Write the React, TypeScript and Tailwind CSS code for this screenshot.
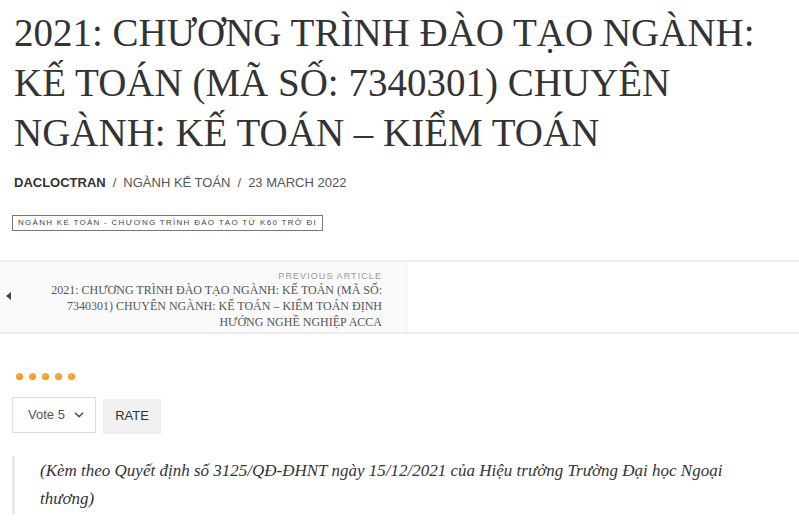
import { ChevronDown } from 'lucide-react';

const serif = "font-['Liberation_Serif',serif]";
const sans = "font-['Liberation_Sans',Arial,sans-serif]";

const App = () => {
  return (
    <div className="w-[799px] min-h-[530px] bg-white overflow-hidden">
      <div className="px-[14px] pt-[8px]">
        <h1 className={`${serif} text-[39px] leading-[50px] text-[#333] font-normal`}>
          2021: CHƯƠNG TRÌNH ĐÀO TẠO NGÀNH: KẾ TOÁN (MÃ SỐ: 7340301) CHUYÊN NGÀNH: KẾ TOÁN – KIỂM TOÁN
        </h1>

        <div className={`${sans} mt-[15px] text-[13px] uppercase text-[#555] flex gap-[7px]`}>
          <span className="font-bold text-[#333]">Dacloctran</span>
          <span>/</span>
          <span>Ngành Kế toán</span>
          <span>/</span>
          <span>23 March 2022</span>
        </div>

        <div className="mt-[14px] -ml-[2px]">
          <span className={`${sans} inline-block border border-[#777] px-[5px] py-[2px] text-[8px] leading-[10px] tracking-[0.16em] uppercase text-[#444]`}>
            Ngành Kế toán - Chương trình đào tạo từ K60 trở đi
          </span>
        </div>
      </div>

      {/* previous / next */}
      <div className="mt-[29px] border-y-2 border-[#eee] flex h-[74px]">
        <div className="w-[407px] bg-[#fafafa] border-r border-[#eee] flex items-center pr-[24px] relative">
          <span className="absolute left-[6px] top-[30px] w-0 h-0 border-y-[4px] border-y-transparent border-r-[5px] border-r-[#444]" />
          <div className="ml-auto text-right pt-[6px]">
            <div className={`${sans} text-[9px] tracking-[0.12em] uppercase text-[#999] leading-[12px]`}>Previous article</div>
            <div className={`${serif} text-[12px] leading-[16px] text-[#555] w-[336px] ml-auto`}>
              2021: CHƯƠNG TRÌNH ĐÀO TẠO NGÀNH: KẾ TOÁN (MÃ SỐ: 7340301) CHUYÊN NGÀNH: KẾ TOÁN – KIỂM TOÁN ĐỊNH HƯỚNG NGHỀ NGHIỆP ACCA
            </div>
          </div>
        </div>
        <div className="flex-1" />
      </div>

      <div className="px-[12px]">
        <div className="mt-[39px] flex gap-[6px] pl-[4px]">
          {[0, 1, 2, 3, 4].map(i => (
            <span key={i} className="w-[7px] h-[7px] rounded-full bg-[radial-gradient(circle_at_40%_35%,#ffb03a,#f28a00)]" />
          ))}
        </div>

        <div className="mt-[17px] flex items-start gap-[7px]">
          <div className={`${sans} w-[84px] h-[36px] border border-[#ddd] flex items-center justify-between pl-[15px] pr-[9px] text-[13px] text-[#555]`}>
            <span>Vote 5</span>
            <ChevronDown size={14} strokeWidth={3} className="text-[#555]" />
          </div>
          <div className={`${sans} mt-[2px] w-[58px] h-[35px] bg-[#f0f0f0] flex items-center justify-center text-[13px] text-[#333]`}>
            RATE
          </div>
        </div>

        <blockquote className="mt-[22px] border-l-[3px] border-[#e8e8e8] pl-[25px] py-[1px]">
          <p className={`${serif} italic text-[17px] leading-[28px] text-[#333] w-[700px]`}>
            (Kèm theo Quyết định số 3125/QĐ-ĐHNT ngày 15/12/2021 của Hiệu trưởng Trường Đại học Ngoại thương)
          </p>
        </blockquote>
      </div>
    </div>
  );
};

export default App;
